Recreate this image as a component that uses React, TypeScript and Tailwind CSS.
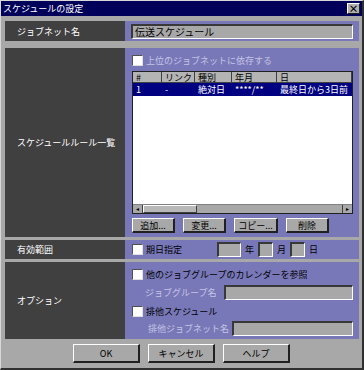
import React from "react";

const font = { fontFamily: '"Noto Sans CJK JP", "Noto Sans", sans-serif' };

function Check({ label, dim }: { label: string; dim?: boolean }) {
    return (
        <div className="flex items-center gap-[3px] h-[12px]">
            <div className="w-[11px] h-[11px] bg-white border-t border-l border-[#505050] border-b border-r border-b-[#e0e0e0] border-r-[#e0e0e0]" />
            <span className={dim ? "text-[#c4c4e4]" : "text-black"}>{label}</span>
        </div>
    );
}

function Field({ className, children }: { className?: string; children?: React.ReactNode }) {
    return (
        <div
            className={
                "bg-[#a8a8a8] border-t-2 border-l-2 border-[#383838] border-b border-r border-b-white border-r-white flex items-center pl-[2px] " +
                (className ?? "")
            }
        >
            {children}
        </div>
    );
}

function Btn({ label, className }: { label: string; className?: string }) {
    return (
        <div
            className={
                "bg-[#a8a8a8] border-t border-l border-white border-b-2 border-r-2 border-b-[#202020] border-r-[#202020] flex items-center justify-center text-black " +
                (className ?? "")
            }
        >
            {label}
        </div>
    );
}

function Label({ text, className }: { text: string; className?: string }) {
    return (
        <div className={"w-[120px] shrink-0 bg-[#404040] text-white flex items-center pl-[12px] " + (className ?? "")}>
            {text}
        </div>
    );
}

export default function App() {
    const cols = [
        { name: "#", w: "w-[29px]", v: "1" },
        { name: "リンク", w: "w-[33px]", v: "-" },
        { name: "種別", w: "w-[37px]", v: "絶対日" },
        { name: "年月", w: "w-[45px]", v: "****/**" },
        { name: "日", w: "flex-1", v: "最終日から3日前" },
    ];

    return (
        <div
            style={font}
            className="w-[364px] h-[370px] bg-[#a8a8a8] border-l border-t border-[#d8d8d8] border-r-2 border-b-2 border-r-[#303030] border-b-[#303030] text-[9px] leading-none flex flex-col"
        >
            <div className="h-[15px] bg-[#00005a] flex items-center justify-between pl-[2px] pr-[2px]">
                <span className="text-white text-[9px]">スケジュールの設定</span>
                <div className="w-[13px] h-[11px] bg-[#b0b0b0] border-t border-l border-white border-b border-r border-b-[#202020] border-r-[#202020] flex items-center justify-center text-black text-[10px] font-bold">
                    ×
                </div>
            </div>

            <div className="flex flex-col pl-[4px] pr-[3px] pt-[5px]">
                <div className="flex h-[20px]">
                    <Label text="ジョブネット名" />
                    <div className="flex-1 bg-[#7878b8] flex items-center px-[6px]">
                        <Field className="w-full h-[15px] text-[10px] text-black">伝送スケジュール</Field>
                    </div>
                </div>

                <div className="flex h-[189px] mt-[7px]">
                    <Label text="スケジュールルール一覧" />
                    <div className="flex-1 bg-[#7878b8] flex flex-col pl-[7px] pr-[6px] pt-[6px]">
                        <Check label="上位のジョブネットに依存する" dim />
                        <div className="mt-[5px] h-[143px] bg-white border border-[#202020] flex flex-col">
                            <div className="flex h-[11px] bg-[#b4b4b4]">
                                {cols.map((c) => (
                                    <div
                                        key={c.name}
                                        className={c.w + " border-r border-b border-[#404040] flex items-center pl-[3px] text-black"}
                                    >
                                        {c.name}
                                    </div>
                                ))}
                            </div>
                            <div className="flex h-[13px] bg-[#000080] text-white">
                                {cols.map((c) => (
                                    <div key={c.name} className={c.w + " flex items-center pl-[3px]"}>
                                        {c.v}
                                    </div>
                                ))}
                            </div>
                            <div className="flex-1" />
                            <div className="flex h-[9px] bg-[#a8a8a8] border-t border-[#808080]">
                                <div className="w-[10px] border-r border-[#404040] flex items-center justify-center text-[6px] text-black">◂</div>
                                <div className="w-[54px] bg-[#b8b8b8] border-t border-l border-white border-b border-r border-b-[#404040] border-r-[#404040]" />
                                <div className="flex-1" />
                                <div className="w-[10px] border-l border-[#404040] flex items-center justify-center text-[6px] text-black">▸</div>
                            </div>
                        </div>
                        <div className="flex gap-[8px] mt-[4px]">
                            <Btn label="追加..." className="w-[43px] h-[15px]" />
                            <Btn label="変更..." className="w-[43px] h-[15px]" />
                            <Btn label="コピー..." className="w-[44px] h-[15px]" />
                            <Btn label="削除" className="w-[43px] h-[15px]" />
                        </div>
                    </div>
                </div>

                <div className="flex h-[19px] mt-[3px]">
                    <Label text="有効範囲" />
                    <div className="flex-1 bg-[#7878b8] flex items-center pl-[7px]">
                        <Check label="期日指定" />
                        <Field className="w-[24px] h-[15px] ml-[35px]" />
                        <span className="ml-[4px] text-black">年</span>
                        <Field className="w-[15px] h-[15px] ml-[4px]" />
                        <span className="ml-[4px] text-black">月</span>
                        <Field className="w-[15px] h-[15px] ml-[4px]" />
                        <span className="ml-[4px] text-black">日</span>
                    </div>
                </div>

                <div className="flex h-[77px] mt-[3px]">
                    <Label text="オプション" />
                    <div className="flex-1 bg-[#7878b8] flex flex-col pl-[7px] pr-[6px] pt-[6px]">
                        <Check label="他のジョブグループのカレンダーを参照" />
                        <div className="flex items-center mt-[5px] h-[15px]">
                            <span className="ml-[13px] w-[79px] text-[#c4c4e4]">ジョブグループ名</span>
                            <Field className="flex-1 h-[15px]" />
                        </div>
                        <div className="mt-[5px]">
                            <Check label="排他スケジュール" />
                        </div>
                        <div className="flex items-center mt-[4px] h-[15px]">
                            <span className="ml-[16px] w-[84px] text-[#c4c4e4]">排他ジョブネット名</span>
                            <Field className="flex-1 h-[15px]" />
                        </div>
                    </div>
                </div>
            </div>

            <div className="flex justify-center gap-[8px] mt-[5px]">
                <Btn label="OK" className="w-[67px] h-[19px]" />
                <Btn label="キャンセル" className="w-[67px] h-[19px]" />
                <Btn label="ヘルプ" className="w-[67px] h-[19px]" />
            </div>
        </div>
    );
}
